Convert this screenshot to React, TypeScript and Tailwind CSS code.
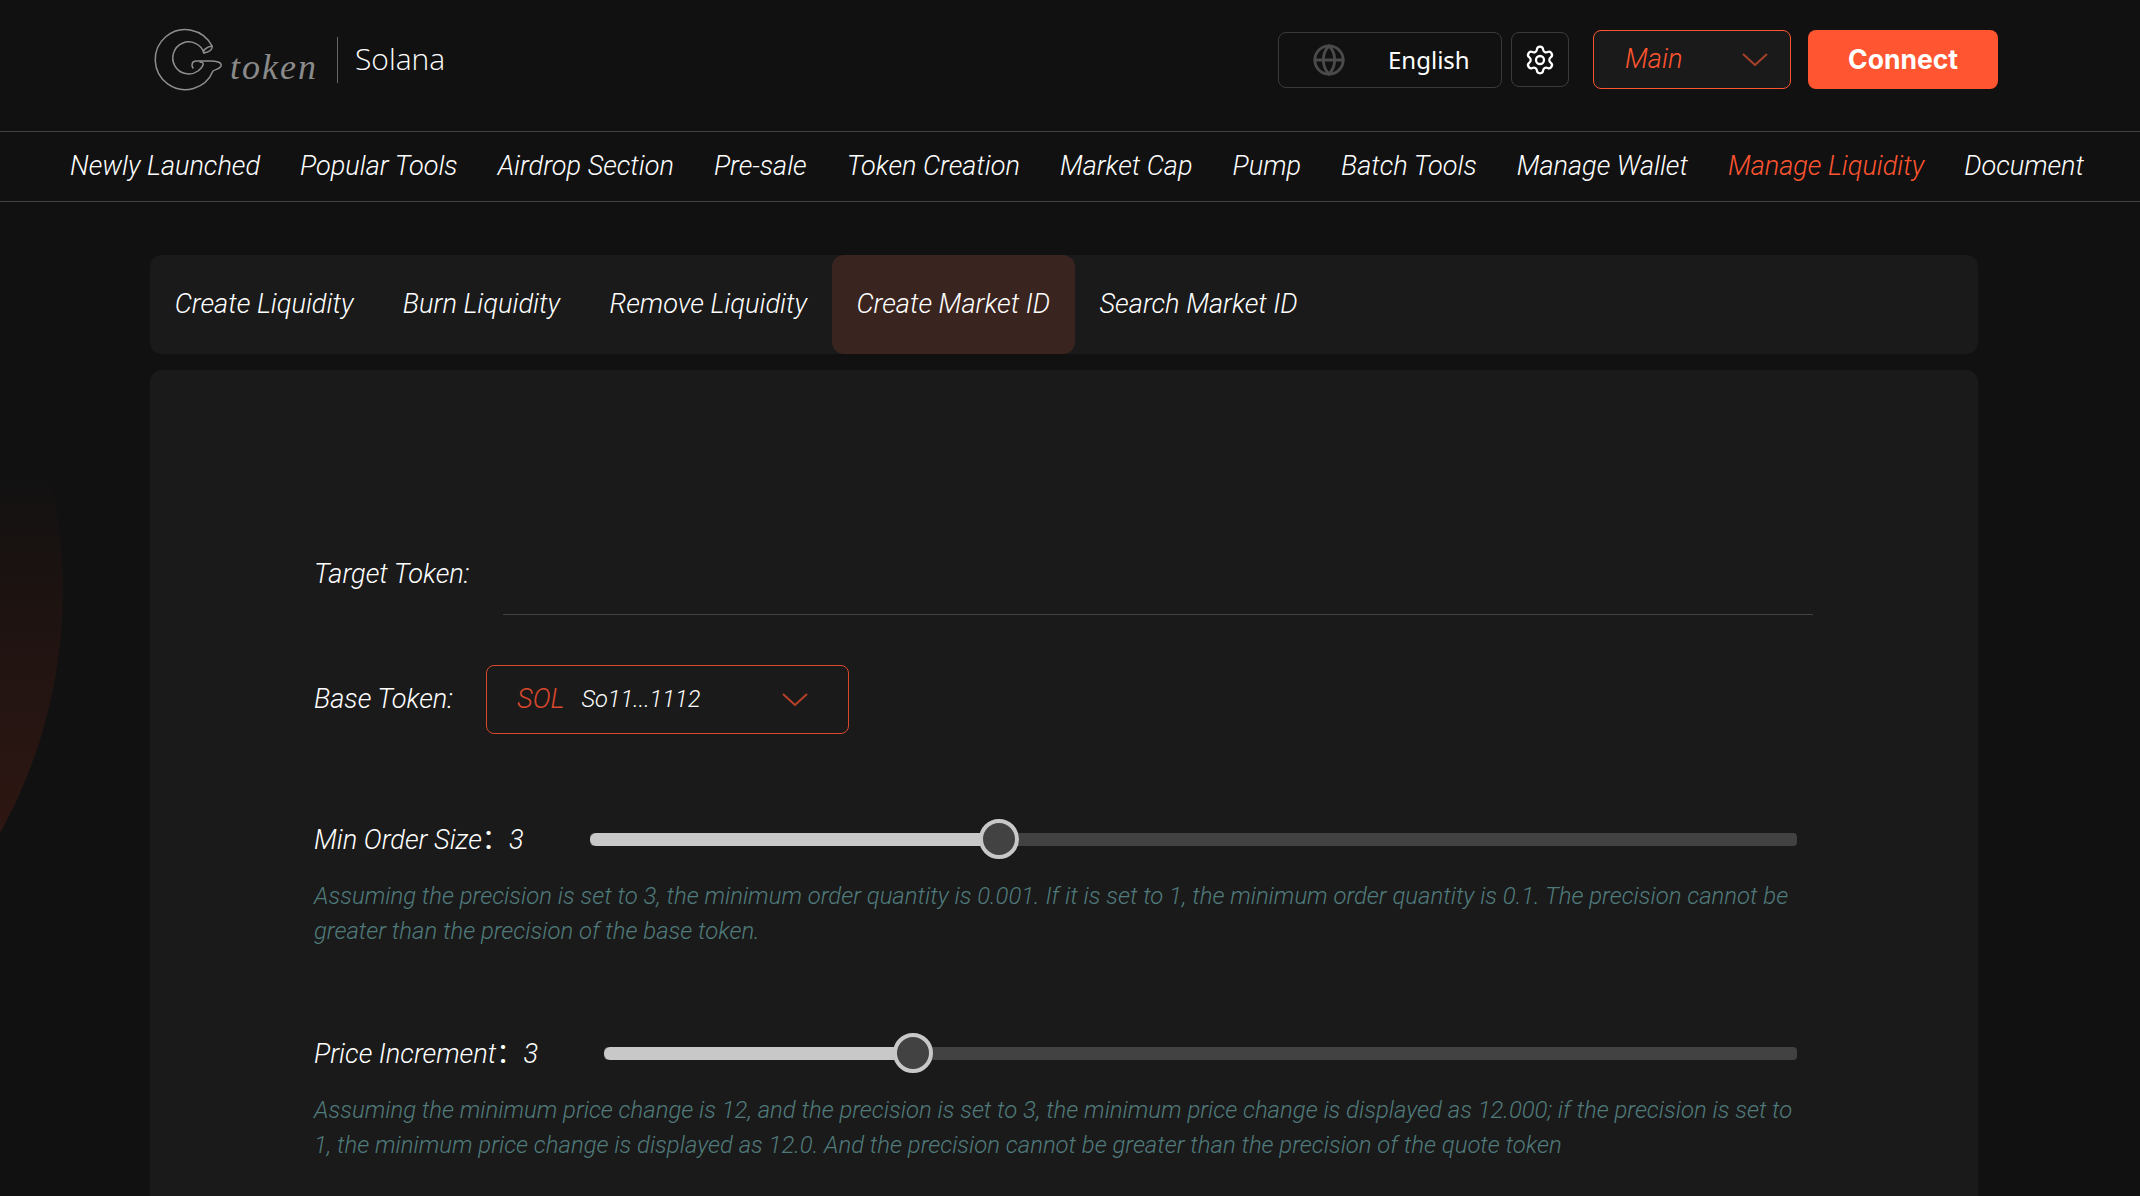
import React from "react";
import { Globe, Settings } from "lucide-react";

const NAV = ["Newly Launched","Popular Tools","Airdrop Section","Pre-sale","Token Creation","Market Cap","Pump","Batch Tools","Manage Wallet","Manage Liquidity","Document"];
const TABS = ["Create Liquidity","Burn Liquidity","Remove Liquidity","Create Market ID","Search Market ID"];

function Logo() {
  return (
    <svg width="74" height="70" viewBox="0 0 74 70" fill="none" stroke="#8f8f8f" strokeWidth="1.5" strokeLinecap="round" className="shrink-0">
      <path d="M62 21 A30 30 0 1 0 63 46 C66 44 70 44 71 41 C72 37 66 36 60 36 L46 36 C42 36 41 40 43 43" />
      <path d="M54 28 A16 16 0 1 0 48 46 C50 44 52 43 53 40 C54 38 52 37 50 37" />
      <path d="M62 21 C63 24 60 27 54 28 C52 26 56 22 62 21 Z" />
    </svg>
  );
}

function Chevron({ color }: { color: string }) {
  return (
    <svg width="26" height="13" viewBox="0 0 26 13" fill="none" stroke={color} strokeWidth="2" className="ml-auto shrink-0">
      <path d="M1 1 L13 12 L25 1" />
    </svg>
  );
}

function SliderRow({ label, value, fill, labelW }: { label: string; value: string; fill: string; labelW: string }) {
  return (
    <div className="flex h-10 items-center">
      <div className={`shrink-0 whitespace-nowrap text-[27.2px] ${labelW}`}>
        {label}
        <span className="font-['Noto_Sans_CJK_SC',sans-serif] font-normal not-italic">：</span>
        {value}
      </div>
      <div className="flex h-[13px] flex-1 rounded-[4px] bg-[#424242]">
        <div className={`h-full rounded-l-[6px] bg-[#c8c8c8] ${fill}`} />
        <div className="-ml-5 -mt-[13.5px] h-10 w-10 shrink-0 rounded-full border-4 border-[#c8c8c8] bg-[#424242]" />
      </div>
    </div>
  );
}

export default function App() {
  return (
    <div className="relative h-[1196px] overflow-hidden bg-[#111111] font-['Roboto',sans-serif] font-light italic text-white">
      <div className="absolute left-[-937px] top-[90px] h-[1000px] w-[1000px] rounded-full bg-gradient-to-b from-[#111111] from-[38%] via-[#1d1311] via-[51%] to-[#2e1612] to-[74%]" />

      <header className="relative flex h-[132px] items-center border-b border-[#444444] pb-3 pl-[150px] pr-[142px] not-italic">
        <Logo />
        <span className="ml-[6px] mt-[14px] font-['Liberation_Serif',serif] text-[36px] font-normal italic tracking-[2px] text-[#8a8a8a]">token</span>
        <div className="ml-[19px] h-[46px] w-px bg-[#666666]" />
        <span className="ml-[17px] -mt-[2px] font-['Open_Sans',sans-serif] text-[30px] font-light">Solana</span>

        <div className="ml-auto flex items-center">
          <div className="flex h-[56px] w-[224px] items-center rounded-lg border border-[#3a3a3a] pl-[33px]">
            <Globe size={34} strokeWidth={2} color="#4a4a4a" />
            <span className="ml-[42px] font-['Noto_Sans',sans-serif] text-[24px] font-normal">English</span>
          </div>
          <div className="ml-[9px] flex h-[55px] w-[58px] items-center justify-center rounded-lg border border-[#3a3a3a]">
            <Settings size={32} strokeWidth={1.7} />
          </div>
          <div className="ml-[24px] flex h-[59px] w-[198px] items-center rounded-lg border border-[#ff5530] bg-[#1a1a1a] pl-[31px] pr-[22px] font-['Roboto',sans-serif] text-[27.2px] font-light italic text-[#ff5530]">
            Main
            <Chevron color="#a8412a" />
          </div>
          <button className="ml-[17px] h-[59px] w-[190px] rounded-lg bg-[#ff5530] font-['Inter',sans-serif] text-[26.5px] font-bold">Connect</button>
        </div>
      </header>

      <nav className="relative flex h-[70px] items-center gap-10 border-b border-[#444444] pl-[70px] text-[27.1px]">
        {NAV.map((n) => (
          <span key={n} className={n === "Manage Liquidity" ? "whitespace-nowrap text-[#ff5530]" : "whitespace-nowrap"}>{n}</span>
        ))}
      </nav>

      <main className="relative ml-[150px] mr-[162px] mt-[53px]">
        <div className="flex h-[99px] rounded-xl bg-[#1a1a1a] text-[27.2px]">
          {TABS.map((t) => (
            <div key={t} className={t === "Create Market ID" ? "flex items-center rounded-xl bg-[#3a2420] px-[24.7px]" : "flex items-center rounded-xl px-[24.7px]"}>{t}</div>
          ))}
        </div>

        <div className="mt-4 h-[900px] rounded-xl bg-[#1a1a1a] pl-[164px] pr-[181px] pt-[162px] text-[27.2px]">
          <div className="flex h-[83px] items-center">
            <div className="mt-[2px] w-[189px] shrink-0">Target Token:</div>
            <div className="h-full w-[1310px] shrink-0 border-b border-[#444444]" />
          </div>

          <div className="mt-[50px] flex items-center">
            <div className="w-[172px] shrink-0">Base Token:</div>
            <div className="flex h-[69px] w-[363px] items-center rounded-lg border border-[#d9482b] pl-[30px] pr-[40px] text-[23.6px]">
              <span className="text-[27.2px] text-[#d9482b]">SOL</span>
              <span className="ml-[17px]">So11...1112</span>
              <Chevron color="#b5412a" />
            </div>
          </div>

          <div className="mt-[85px]">
            <SliderRow label="Min Order Size" value="3" fill="w-[409px]" labelW="w-[276px]" />
            <p className="mt-5 text-[23.9px] leading-[35px] text-[#507a7c]">
              Assuming the precision is set to 3, the minimum order quantity is 0.001. If it is set to 1, the minimum order quantity is 0.1. The precision cannot be greater than the precision of the base token.
            </p>
          </div>

          <div className="mt-[84px]">
            <SliderRow label="Price Increment" value="3" fill="w-[309px]" labelW="w-[290px]" />
            <p className="mt-5 text-[23.9px] leading-[35px] text-[#507a7c]">
              Assuming the minimum price change is 12, and the precision is set to 3, the minimum price change is displayed as 12.000; if the precision is set to 1, the minimum price change is displayed as 12.0. And the precision cannot be greater than the precision of the quote token
            </p>
          </div>
        </div>
      </main>
    </div>
  );
}
